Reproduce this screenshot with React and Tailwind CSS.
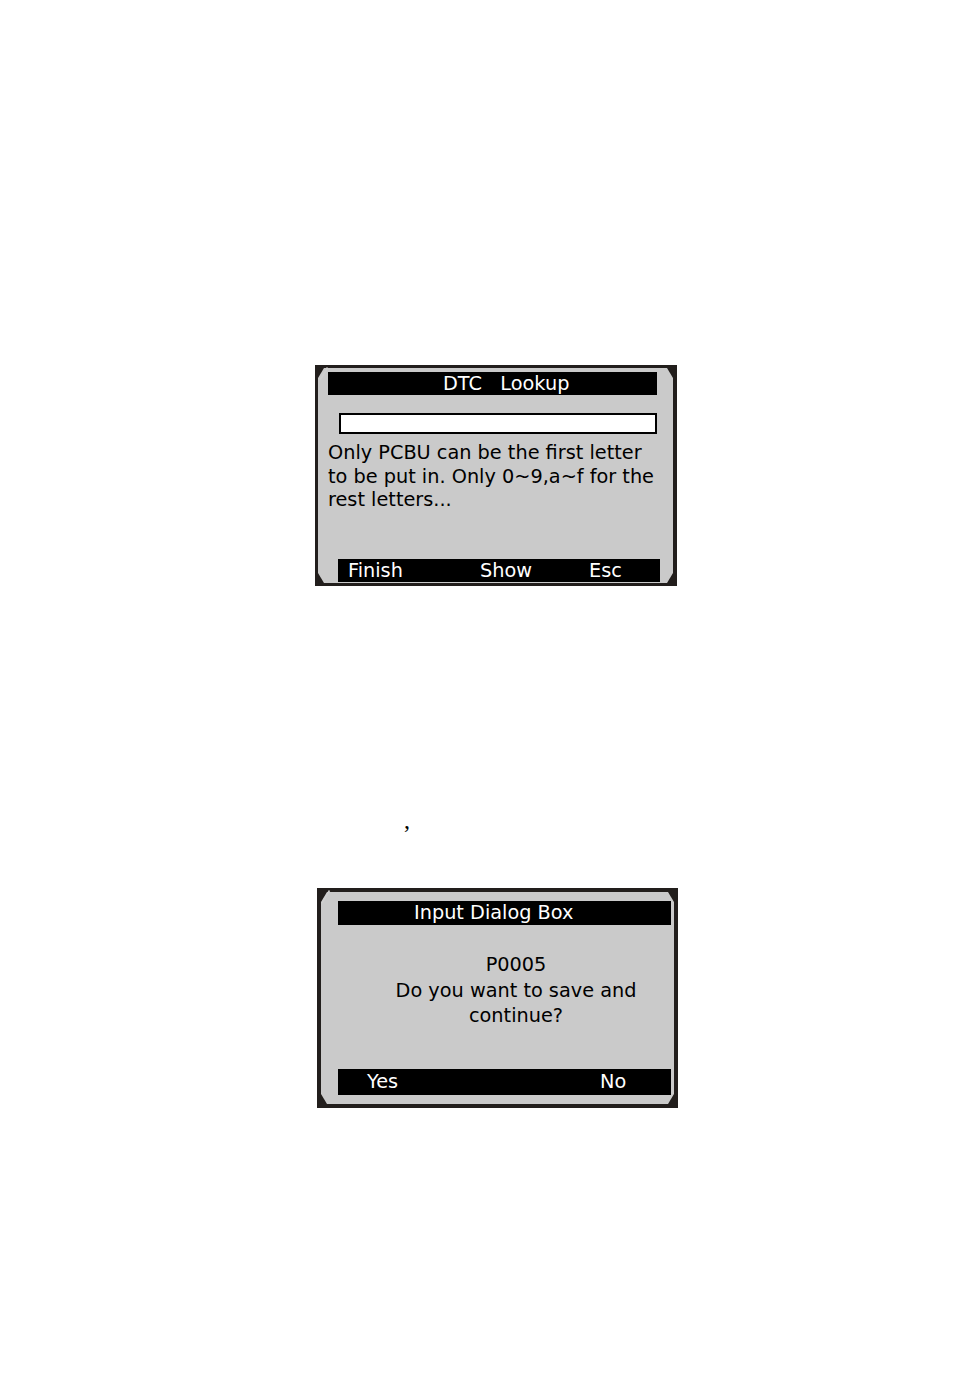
const CLIP = '[clip-path:polygon(6px_0,calc(100%_-_6px)_0,100%_10px,100%_calc(100%_-_10px),calc(100%_-_6px)_100%,6px_100%,0_calc(100%_-_10px),0_10px)]'

function Bezel({ outer, inner, children }) {
  return (
    <div className={`relative bg-[#221e1c] ${outer}`}>
      <div className={`relative h-full bg-[#cacaca] ${CLIP} ${inner}`}>{children}</div>
      <svg className="absolute left-0 top-0" width="16" height="18" viewBox="0 0 16 18">
        <line x1="5" y1="15" x2="12.5" y2="2.5" stroke="#cfcfcf" strokeWidth="1.6" />
      </svg>
    </div>
  )
}

export default function App() {
  return (
    <div className="w-[954px] h-[1374px] bg-white flex flex-col pt-[365px] text-[19.3px] text-black" style={{ fontFamily: '"DejaVu Sans", Verdana, sans-serif' }}>
      <Bezel outer="ml-[315px] w-[362px] h-[221px] pl-[3px] pt-[3px] pr-[4px] pb-[3px]" inner="flex flex-col">
        <div className="ml-[10px] mt-[4px] w-[329px] h-[23px] bg-black text-white leading-[23px] pl-[115px] whitespace-pre">DTC   Lookup</div>
        <div className="ml-[21px] mt-[18px] w-[318px] h-[21px] bg-white border-2 border-black" />
        <p className="ml-[10px] mt-[7px] leading-[23.5px] whitespace-pre">{'Only PCBU can be the first letter\nto be put in. Only 0~9,a~f for the\nrest letters...'}</p>
        <div className="mt-auto mb-[1px] ml-[20px] w-[322px] h-[23px] bg-black text-white leading-[23px] flex pl-[10px]">
          <span className="w-[132px]">Finish</span>
          <span className="w-[109px]">Show</span>
          <span>Esc</span>
        </div>
      </Bezel>

      <div className="ml-[404px] mt-[222px] h-[24px] text-[24px] leading-[24px]" style={{ fontFamily: '"Liberation Serif", serif' }}>,</div>

      <Bezel outer="ml-[317px] mt-[56px] w-[361px] h-[220px] p-[4px]" inner="flex flex-col">
        <div className="ml-[17px] mt-[9px] w-[333px] h-[24px] bg-black text-white leading-[24px] pl-[76px]">Input Dialog Box</div>
        <div className="ml-[38px] mt-[27px] w-[314px] text-center leading-[25.5px]">
          <p>P0005</p>
          <p>Do you want to save and</p>
          <p>continue?</p>
        </div>
        <div className="mt-auto mb-[9px] ml-[17px] w-[333px] h-[26px] bg-black text-white leading-[26px] flex pl-[29px]">
          <span className="w-[233px]">Yes</span>
          <span>No</span>
        </div>
      </Bezel>
    </div>
  )
}
